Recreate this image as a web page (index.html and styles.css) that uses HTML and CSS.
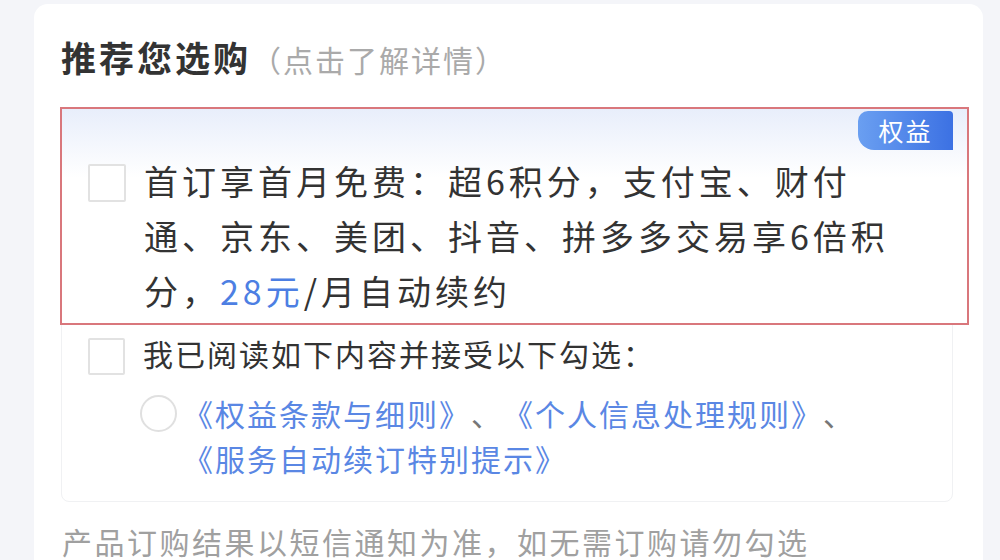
FILE: index.html
```html
<!DOCTYPE html>
<html lang="zh-CN">
<head>
	<meta charset="UTF-8">
	<meta name="viewport" content="width=device-width, initial-scale=1">

	<title>推荐您选购</title>

	<link rel="stylesheet" href="styles.css">
</head>
<body>
	<div class="card">

		<h2 class="title">推荐您选购<span class="title-hint">（点击了解详情）</span></h2>

		<div class="group">

			<!-- highlighted offer -->
			<div class="offer">
				<span class="badge">权益</span>
				<span class="check"></span>
				<p class="offer-text">首订享首月免费：超6积分，支付宝、财付通、京东、美团、抖音、拼多多交易享6倍积分，<span class="price">28元</span>/月自动续约</p>
			</div>

			<!-- agreement -->
			<div class="agree">
				<div class="agree-row">
					<span class="check check-small"></span>
					<p class="agree-text">我已阅读如下内容并接受以下勾选：</p>
				</div>
				<div class="terms-row">
					<span class="radio"></span>
					<p class="terms"><a href="#">《权益条款与细则》</a>、<a href="#">《个人信息处理规则》</a>、<a href="#">《服务自动续订特别提示》</a></p>
				</div>
			</div>

		</div>

		<p class="note">产品订购结果以短信通知为准，如无需订购请勿勾选</p>

	</div>
</body>
</html>
```

FILE: styles.css
```css
* {
	margin: 0;
	padding: 0;
	box-sizing: border-box;
}

body {
	background: #f4f5f9;
	font-family: "Noto Sans CJK SC", "Noto Sans", sans-serif;
	color: #333;
	height: 560px;
	overflow: hidden;
	text-spacing-trim: space-all;
}

.card {
	margin: 4px 17px 0 34px;
	background: #fff;
	border-radius: 14px 14px 0 0;
	padding: 28px 30px 0 27px;
	height: 556px;
}

.title {
	font-size: 35px;
	line-height: 50px;
	font-weight: 700;
	letter-spacing: 3px;
	color: #333;
	margin-bottom: 23px;
}

.title-hint {
	font-size: 30px;
	font-weight: 400;
	letter-spacing: 2px;
	color: #aaa;
}

.group {
	border: 1px solid #f0f1f3;
	border-radius: 8px;
}

.offer {
	position: relative;
	display: flex;
	align-items: flex-start;
	gap: 18px;
	margin: -1px -17px 0 -2px;
	padding: 44px 59px 5px 26px;
	border: 2px solid #d9777c;
	background: linear-gradient(#e8eefb, #fff 32%);
}

.badge {
	position: absolute;
	top: 2px;
	right: 14px;
	width: 95px;
	height: 39px;
	line-height: 39px;
	text-align: center;
	font-size: 25px;
	letter-spacing: 2px;
	color: #fff;
	background: linear-gradient(90deg, #6a9ff1, #3c71e3);
	border-radius: 10px 4px 0 16px;
}

.check {
	flex: none;
	width: 38px;
	height: 38px;
	margin-top: 11px;
	border: 2px solid #e2e2e2;
	border-radius: 2px;
	background: #fff;
}

.offer-text {
	flex: 1;
	font-size: 34px;
	line-height: 55px;
	letter-spacing: 4px;
	color: #333;
}

.price {
	color: #4d7fe3;
}

.agree {
	padding: 8px 69px 20px 26px;
}

.agree-row {
	display: flex;
	align-items: flex-start;
	gap: 18px;
}

.check-small {
	margin-top: 5px;
	width: 37px;
	height: 37px;
}

.agree-text {
	font-size: 30px;
	line-height: 40px;
	letter-spacing: 2px;
	color: #333;
}

.terms-row {
	display: flex;
	align-items: flex-start;
	gap: 6px;
	margin: 16px 0 0 52px;
}

.radio {
	flex: none;
	width: 37px;
	height: 37px;
	margin-top: 4px;
	border: 2px solid #e0e0e0;
	border-radius: 50%;
}

.terms {
	font-size: 30px;
	line-height: 45px;
	letter-spacing: 2px;
	color: #777;
}

.terms a {
	color: #5a87e4;
	text-decoration: none;
}

.note {
	margin: 19px 0 0 1px;
	font-size: 30px;
	line-height: 40px;
	letter-spacing: 2.5px;
	color: #a0a0a0;
}
```
